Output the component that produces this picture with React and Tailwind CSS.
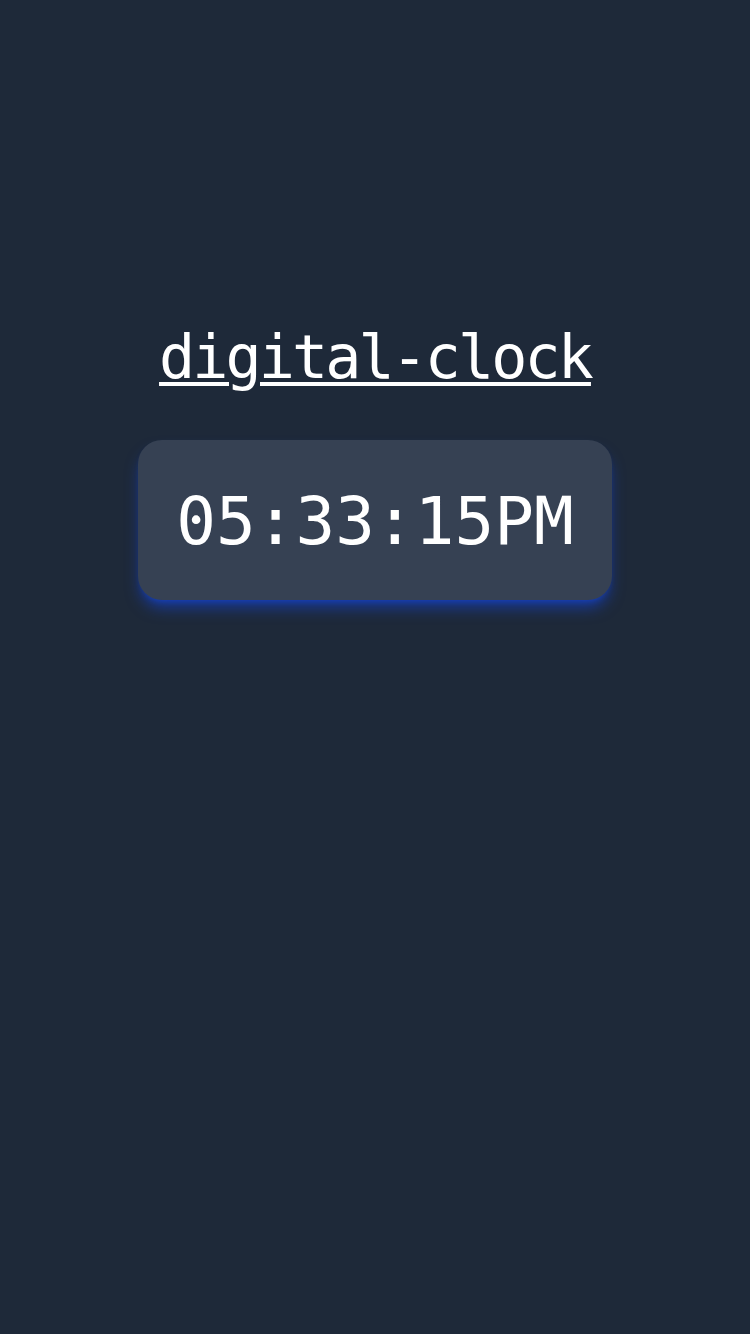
import React from 'react';

const App = () => {
  return (
    <div className="min-h-screen w-full bg-gray-800 flex flex-col items-center pt-[327px] text-white font-['DejaVu_Sans_Mono',monospace]">
      <h1 className="text-6xl leading-none tracking-[-2.9px] underline underline-offset-[4px] decoration-[4px]">
        digital-clock
      </h1>
      <div className="mt-[53px] w-[474px] h-[160px] bg-gray-700 rounded-3xl shadow-lg shadow-blue-700/60 flex items-center justify-center">
        <span className="text-[66px] leading-none pt-[4px]">05:33:15PM</span>
      </div>
    </div>
  );
};

export default App;
